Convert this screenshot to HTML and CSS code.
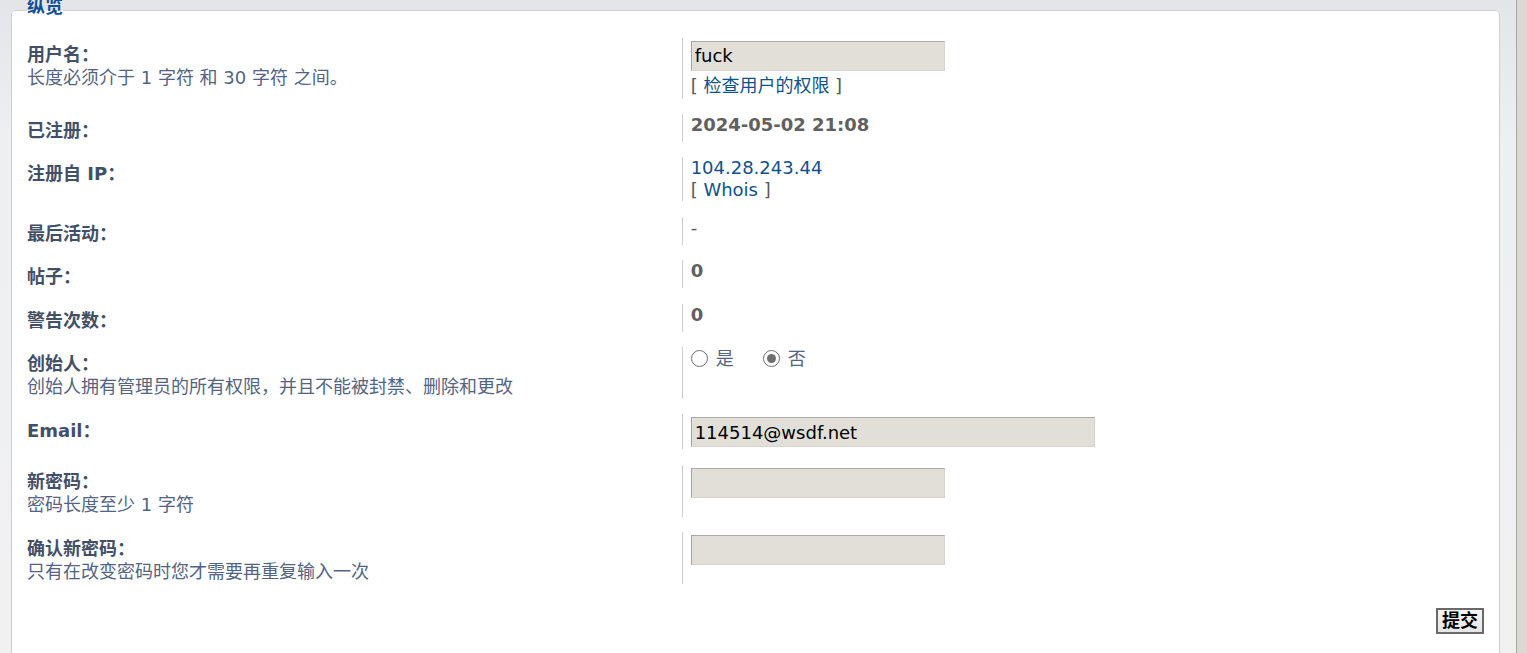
FILE: index.html
```html
<!DOCTYPE html>
<html lang="zh-CN">
<head>
<meta charset="utf-8">
<title>管理用户</title>
<link rel="stylesheet" href="styles.css">
</head>
<body>
<div class="page">
  <div class="main">
    <form class="form">
      <fieldset class="panel">
        <legend class="legend">纵览</legend>

        <dl class="row">
          <dt><label class="lbl">用户名：</label><span class="explain">长度必须介于 1 字符 和 30 字符 之间。</span></dt>
          <dd class="dd-field">
            <input class="text w-sm" type="text" value="fuck">
            <div class="links">[ <a class="link" href="#">检查用户的权限</a> ]</div>
          </dd>
        </dl>

        <dl class="row">
          <dt><label class="lbl">已注册：</label></dt>
          <dd><strong class="val">2024-05-02 21:08</strong></dd>
        </dl>

        <dl class="row">
          <dt><label class="lbl">注册自 IP：</label></dt>
          <dd>
            <a class="link" href="#">104.28.243.44</a>
            <div class="links-plain">[ <a class="link" href="#">Whois</a> ]</div>
          </dd>
        </dl>

        <dl class="row">
          <dt><label class="lbl">最后活动：</label></dt>
          <dd><span class="plain">-</span></dd>
        </dl>

        <dl class="row">
          <dt><label class="lbl">帖子：</label></dt>
          <dd><strong class="val">0</strong></dd>
        </dl>

        <dl class="row">
          <dt><label class="lbl">警告次数：</label></dt>
          <dd><strong class="val">0</strong></dd>
        </dl>

        <dl class="row">
          <dt><label class="lbl">创始人：</label><span class="explain">创始人拥有管理员的所有权限，并且不能被封禁、删除和更改</span></dt>
          <dd class="dd-radio">
            <label class="radio"><input type="radio" name="founder" value="1"><span>是</span></label>
            <label class="radio"><input type="radio" name="founder" value="0" checked><span>否</span></label>
          </dd>
        </dl>

        <dl class="row">
          <dt><label class="lbl">Email：</label></dt>
          <dd class="dd-field"><input class="text w-lg" type="text" value="114514@wsdf.net"></dd>
        </dl>

        <dl class="row">
          <dt><label class="lbl">新密码：</label><span class="explain">密码长度至少 1 字符</span></dt>
          <dd class="dd-field"><input class="text w-sm" type="password" value=""></dd>
        </dl>

        <dl class="row">
          <dt><label class="lbl">确认新密码：</label><span class="explain">只有在改变密码时您才需要再重复输入一次</span></dt>
          <dd class="dd-field"><input class="text w-sm" type="password" value=""></dd>
        </dl>

        <div class="submit-row"><button class="btn" type="button">提交</button></div>
      </fieldset>
    </form>
  </div>
  <div class="sidebar-edge"></div>
</div>
</body>
</html>
```

FILE: styles.css
```css
html, body {
  margin: 0;
  padding: 0;
  height: 100%;
  overflow: hidden;
}

body {
  font-family: "DejaVu Sans", "Noto Sans CJK SC", sans-serif;
  font-size: 18px;
  color: #425067;
}

.page {
  display: flex;
  height: 100%;
}

.main {
  flex: 1;
  background: linear-gradient(to bottom, #e4e5e8 0, #eeeff1 140px, #f1f1f2 100%);
  padding: 0 16px 0 11px;
  min-width: 0;
}

.sidebar-edge {
  width: 10px;
  flex: none;
  border-left: 1px solid #a6a6a6;
  background: #dcd9d3;
}

.form {
  margin: 0;
}

.panel {
  margin: -3.5px 0 0 0;
  padding: 5.5px 15px 40px 15px;
  background: #ffffff;
  border: 1px solid #cfcfcf;
  border-radius: 4px;
  min-width: 0;
}

.legend {
  padding: 0 0 8px 0;
  font-weight: bold;
  line-height: 20px;
  color: #115098;
}

.row {
  display: flex;
  margin: 0;
  padding: 7.7px 0;
}

.row dt {
  width: calc(45% - 1px);
  flex: none;
  padding-top: 5px;
}

.lbl {
  display: block;
  font-weight: bold;
  line-height: 23px;
  color: #425067;
}

.explain {
  display: block;
  line-height: 24px;
  color: #536482;
}

.row dd {
  flex: 1;
  margin: 0;
  border-left: 1px solid #cccccc;
  padding-left: 8px;
  line-height: 22px;
  min-width: 0;
}

.dd-field {
  padding-top: 3px;
  padding-bottom: 2px;
}

.text {
  display: block;
  box-sizing: border-box;
  height: 30px;
  margin: 0;
  padding: 0 3px;
  font-family: "DejaVu Sans", "Noto Sans CJK SC", sans-serif;
  font-size: 18px;
  color: #000000;
  background: #e2dfd9;
  border: 1px solid #d6d2cc;
  border-top-color: #aaaaaa;
  border-left-color: #a4a4a4;
  outline: none;
}

.w-sm { width: 254px; }
.w-lg { width: 404px; }

.links {
  margin-top: 4px;
  color: #5a5a5a;
}

.links-plain {
  color: #5a5a5a;
}

.link {
  color: #105289;
  text-decoration: none;
}

.val {
  font-weight: bold;
  color: #606060;
}

.plain {
  color: #5a5a5a;
}

.dd-radio {
  display: flex;
  align-items: flex-start;
  gap: 29px;
  padding-top: 1px;
}

.radio {
  display: inline-flex;
  align-items: center;
  gap: 8px;
  height: 22px;
  color: #536482;
}

.radio input {
  appearance: none;
  -webkit-appearance: none;
  box-sizing: border-box;
  width: 17px;
  height: 17px;
  margin: 0;
  border: 1.5px solid #6f6f6f;
  border-radius: 50%;
  background: #ffffff;
  display: grid;
  place-items: center;
}

.radio input:checked::after {
  content: "";
  width: 9px;
  height: 9px;
  border-radius: 50%;
  background: #6f6f6f;
}

.submit-row {
  display: flex;
  justify-content: flex-end;
  padding-top: 16px;
}

.btn {
  box-sizing: border-box;
  height: 26px;
  margin: 0;
  padding: 0 4px;
  font-family: "DejaVu Sans", "Noto Sans CJK SC", sans-serif;
  font-size: 18px;
  font-weight: bold;
  line-height: 22px;
  color: #000000;
  background: linear-gradient(to bottom, #f6f6f6, #e6e6e6);
  border: 2px solid #6a6a6a;
  border-radius: 0;
}
```
